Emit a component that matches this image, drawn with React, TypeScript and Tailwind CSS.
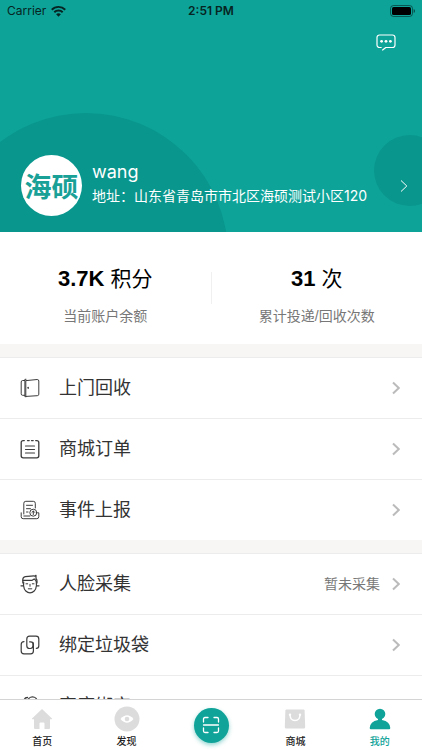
import type { ReactNode } from "react";

const line = {
  fill: "none",
  stroke: "currentColor",
  strokeLinecap: "round" as const,
  strokeLinejoin: "round" as const,
};

function WifiIcon() {
  return (
    <svg viewBox="0 0 15 11" className="h-[11px] w-[15px]" fill="currentColor" aria-hidden="true">
      <path d="M7.5 0C4.6 0 2 1.1.1 3l1.3 1.4a8.6 8.6 0 0 1 12.2 0L14.9 3A10.500 10.500 0 0 0 7.500 0Z" />
      <path d="M7.500 3.600c-1.900 0-3.600.7-4.900 2L4 7a5 5 0 0 1 7 0l1.400-1.400a7 7 0 0 0-4.900-2Z" />
      <path d="M7.500 7.200c-.9 0-1.700.4-2.400 1L7.500 10.800l2.400-2.600c-.7-.6-1.500-1-2.400-1Z" />
    </svg>
  );
}

function BatteryIcon() {
  return (
    <svg viewBox="0 0 25 12" className="h-3 w-[25px]" aria-hidden="true">
      <rect x=".5" y=".5" width="22" height="11" rx="3" fill="none" stroke="#000" strokeOpacity=".45" />
      <rect x="2" y="2" width="19" height="8" rx="1.600" fill="#000" />
      <path d="M23.700 4v4c.8-.3 1.300-1.100 1.300-2s-.5-1.700-1.300-2Z" fill="#000" fillOpacity=".5" />
    </svg>
  );
}

function MessageIcon() {
  return (
    <svg viewBox="0 0 20 17" className="h-[17px] w-5" aria-hidden="true">
      <path
        {...line}
        strokeWidth="1.200"
        d="M5.200 13.500H3.500A2.500 2.500 0 0 1 1 11V3.500A2.500 2.500 0 0 1 3.500 1h13A2.500 2.500 0 0 1 19 3.500V11a2.500 2.500 0 0 1-2.500 2.500H9.800L6.600 16"
      />
      <g fill="currentColor">
        <circle cx="5.600" cy="7.300" r="1.400" />
        <circle cx="10" cy="7.300" r="1.400" />
        <circle cx="14.400" cy="7.300" r="1.400" />
      </g>
    </svg>
  );
}

function Chevron({ className }: { className: string }) {
  return (
    <svg viewBox="0 0 8 14" className={className} aria-hidden="true">
      <path d="M1 1.500 6.800 7 1 12.500" fill="none" stroke="currentColor" />
    </svg>
  );
}

function RowIcon({ children }: { children: ReactNode }) {
  return (
    <svg viewBox="0 0 20 20" className="h-5 w-5 shrink-0 text-[#3c3c3c]" {...line} aria-hidden="true">
      {children}
    </svg>
  );
}

const doorIcon = (
  <RowIcon>
    <path d="M6.200 2.600 17.200 1.500q1.600 0 1.600 1.500v13.200q0 1.400-1.500 1.500L6.200 18.400Z" />
    <path d="M6 1.300H4.900V18.700H6M4.700 2.500H2.600Q1.200 2.500 1.200 4v11.800q0 1.500 1.400 1.500h2.100" />
    <path d="M8.200 9.300v1" strokeWidth="1.300" />
  </RowIcon>
);

const orderIcon = (
  <RowIcon>
    <path
      d="M4.300 1.600H3.200Q1.200 1.600 1.200 3.600V16.800q0 2 2 2H16.800q2 0 2-2V3.600q0-2-2-2h-1.100M7.500 1.600h1.700M11.500 1.600h1.700"
      strokeWidth="1.300"
    />
    <path d="M5.500 7h9M5.500 10.500h9M5.500 14h9" strokeWidth="1.200" />
  </RowIcon>
);

const reportIcon = (
  <RowIcon>
    <path d="M3.800 14V3.300q0-2 2-2h7.500q2 0 2 2V8M3.800 16h6" />
    <path d="M6.500 5.300h6M6.500 8.700h4M6.500 12h1.500" />
    <circle cx="13.300" cy="12.700" r="3.500" />
    <path d="M13.300 14.500v-3.300M11.900 12.400l1.400-1.400 1.400 1.400" />
    <path d="M1.200 12.800v3.900q0 2 2 2h13.600q2 0 2-2v-3.900h-1" />
  </RowIcon>
);

const faceIcon = (
  <RowIcon>
    <path d="M2.800 9V5.500q0-2.300 2.500-2.800L14 1.800q.5 0 .8.500l1.200-1v3.200q1 1 1 2.500v2" strokeWidth="1.200" />
    <path d="M2.800 6.300h9.400l2-1.400q1.600 1 2.200 2.800" strokeWidth="1.200" />
    <path
      d="M1 11.800h2.500l.2-3.800M19 11.800h-2.500L16.300 8M3.600 11.800q.3 3.500 2.200 5.200 2 1.900 4.200 1.900t4.200-1.900q1.900-1.700 2.200-5.200"
      strokeWidth="1.200"
    />
    <path d="M6 9.800h1.700M12.300 9.800h1.700M10 10.300v2M8.300 14.800h3.500" />
  </RowIcon>
);

const bagIcon = (
  <RowIcon>
    <path
      d="M13 7.800v3q0 2.700-2.700 2.700H9.500q-2.700 0-2.700-2.700V4q0-2.800 2.800-2.800h6.400q2.800 0 2.800 2.800v6.700q0 2.600-2.500 2.600"
      strokeWidth="1.200"
    />
    <path
      d="M4 6.600Q1.200 6.600 1.200 9.400v6.600q0 2.800 2.800 2.800h6.600q2.800 0 2.800-2.800V9.600q0-2.800-2.800-2.800h-1"
      strokeWidth="1.200"
    />
  </RowIcon>
);

const familyIcon = (
  <RowIcon>
    <circle cx="12.500" cy="5.500" r="4.600" strokeWidth="1.300" />
    <path
      d="M7.500 1.500Q4 1.500 4 5.500q0 2.500 2 4M1.500 18q0-5 3.500-6.500M6 18.500q0-6 6.500-6t6 6"
      strokeWidth="1.300"
    />
  </RowIcon>
);

type Item = { label: string; icon: ReactNode; note?: string };

const groups: Item[][] = [
  [
    { label: "上门回收", icon: doorIcon },
    { label: "商城订单", icon: orderIcon },
    { label: "事件上报", icon: reportIcon },
  ],
  [
    { label: "人脸采集", icon: faceIcon, note: "暂未采集" },
    { label: "绑定垃圾袋", icon: bagIcon },
    { label: "家庭绑定", icon: familyIcon },
  ],
];

function Stat({ value, unit, caption }: { value: string; unit: string; caption: string }) {
  return (
    <div className="flex flex-1 flex-col items-center gap-[13px] pt-[14px]">
      <p className="flex items-baseline gap-[6px] text-[21px] leading-7 text-black">
        <strong className="text-[22px]">{value}</strong>
        <span>{unit}</span>
      </p>
      <p className="text-sm text-[#777]">{caption}</p>
    </div>
  );
}

function Tab({ label, active, children }: { label: string; active?: boolean; children: ReactNode }) {
  return (
    <a
      href="#"
      className={
        "flex flex-1 flex-col items-center justify-between pt-[6px] text-[10px] leading-4 font-medium " +
        (active ? "text-[#0fa399]" : "text-[#222]")
      }
    >
      <svg viewBox="0 0 26 26" className="h-[26px] w-[26px]" aria-hidden="true">
        {children}
      </svg>
      {label}
    </a>
  );
}

export default function App() {
  return (
    <div className="flex h-dvh flex-col overflow-hidden bg-[#f7f6f5] font-['Liberation_Sans','Noto_Sans_CJK_SC',sans-serif]">
      <header className="relative flex h-[232px] shrink-0 flex-col overflow-hidden bg-[#0ea399] text-white">
        <div className="absolute top-[113px] left-[-56px] h-[284px] w-[284px] rounded-full bg-[#09968d]" />
        <div className="absolute top-[135px] right-[-23px] h-[71px] w-[71px] rounded-full bg-[#09968d]" />

        <div className="relative grid h-[22px] grid-cols-3 items-center px-[7px] font-['Inter',sans-serif] text-xs text-[#062522]">
          <span className="flex items-center gap-[5px]">
            Carrier
            <WifiIcon />
          </span>
          <span className="text-center font-semibold">2:51 PM</span>
          <span className="flex justify-end">
            <BatteryIcon />
          </span>
        </div>

        <button type="button" aria-label="消息" className="relative mt-3 mr-[26px] self-end">
          <MessageIcon />
        </button>

        <a href="#" className="relative mt-auto mb-4 flex items-center pr-[14px] pl-[21px]">
          <span className="flex h-[61px] w-[61px] shrink-0 items-center justify-center rounded-full bg-white font-['Noto_Sans_CJK_SC',sans-serif] text-[27px] leading-none font-bold text-[#19a198]">
            海硕
          </span>
          <span className="ml-[10px] flex flex-1 flex-col pb-1 font-['Inter','Noto_Sans_CJK_SC',sans-serif] whitespace-nowrap">
            <span className="text-lg leading-6">wang</span>
            <span className="text-sm leading-6">地址：山东省青岛市市北区海硕测试小区120</span>
          </span>
          <Chevron className="h-[14px] w-2" />
        </a>
      </header>

      <main className="min-h-0 flex-1 overflow-y-auto [scrollbar-width:none]">
        <section className="flex h-28 items-center bg-white">
          <Stat value="3.7K" unit="积分" caption="当前账户余额" />
          <div className="h-8 w-px bg-[#f0f0f0]" />
          <Stat value="31" unit="次" caption="累计投递/回收次数" />
        </section>

        {groups.map((group, g) => (
          <ul key={g} className="mt-[13px] border-t border-[#ececec] bg-white">
            {group.map((item) => (
              <li key={item.label} className="border-b border-[#ececec] last:border-b-0">
                <a href="#" className="flex h-[60px] items-center pr-[22px] pl-5">
                  {item.icon}
                  <span className="ml-[19px] flex-1 text-lg text-[#333]">{item.label}</span>
                  <span className="mr-3 text-sm text-[#777]">{item.note}</span>
                  <Chevron className="h-[14px] w-2 stroke-2 text-[#bbb]" />
                </a>
              </li>
            ))}
          </ul>
        ))}
      </main>

      <nav className="flex h-[51px] shrink-0 border-t border-[#d4d4d4] bg-white">
        <Tab label="首页">
          <path
            d="M13 3 23 12.500q.5.800-.5.800H21V22q0 1-1 1h-4.500v-5.500q0-1-1-1h-3q-1 0-1 1V23H6q-1 0-1-1v-8.700H3.500q-1 0-.5-.8Z"
            fill="#dcdcdc"
          />
        </Tab>
        <Tab label="发现">
          <circle cx="13" cy="13" r="12.500" fill="#dcdcdc" />
          <path d="M6.500 13Q13 5.500 19.500 13 13 20.500 6.500 13Z" fill="#fff" />
          <circle cx="13" cy="13" r="2.300" fill="#dcdcdc" />
        </Tab>
        <div className="flex flex-1 items-center justify-center">
          <button
            type="button"
            aria-label="扫一扫"
            className="flex h-[35px] w-[35px] items-center justify-center rounded-full bg-[#0fa399] text-white shadow-[0_2px_4px_rgba(15,163,153,0.45)]"
          >
            <svg viewBox="0 0 18 18" className="h-[18px] w-[18px]" {...line} strokeWidth="1.300" aria-hidden="true">
              <path d="M1.500 6V3Q1.500 1.500 3 1.500h3M12 1.500h3Q16.500 1.500 16.500 3v3M1.500 12v3q0 1.500 1.500 1.500h3M12 16.500h3q1.500 0 1.500-1.500v-3M1.500 9h15" />
            </svg>
          </button>
        </div>
        <Tab label="商城">
          <path d="M4.500 3.500h17q1 0 1.100 1l.6 16.500q0 1.500-1.500 1.500H4.300q-1.500 0-1.500-1.500l.6-16.500q.1-1 1.100-1Z" fill="#dcdcdc" />
          <path d="M8 9q.3 5.500 5 5.500T18 9" fill="none" stroke="#fff" strokeWidth="1.400" />
          <circle cx="8" cy="8.800" r="1.200" fill="#fff" />
          <circle cx="18" cy="8.800" r="1.200" fill="#fff" />
        </Tab>
        <Tab label="我的" active>
          <g fill="currentColor">
            <circle cx="13" cy="8" r="5.300" />
            <path d="M11 12h4v2q8 1.500 8.300 8 0 1.200-1.200 1.200H3.900q-1.200 0-1.200-1.200Q3 15.500 11 14Z" />
          </g>
        </Tab>
      </nav>
    </div>
  );
}
